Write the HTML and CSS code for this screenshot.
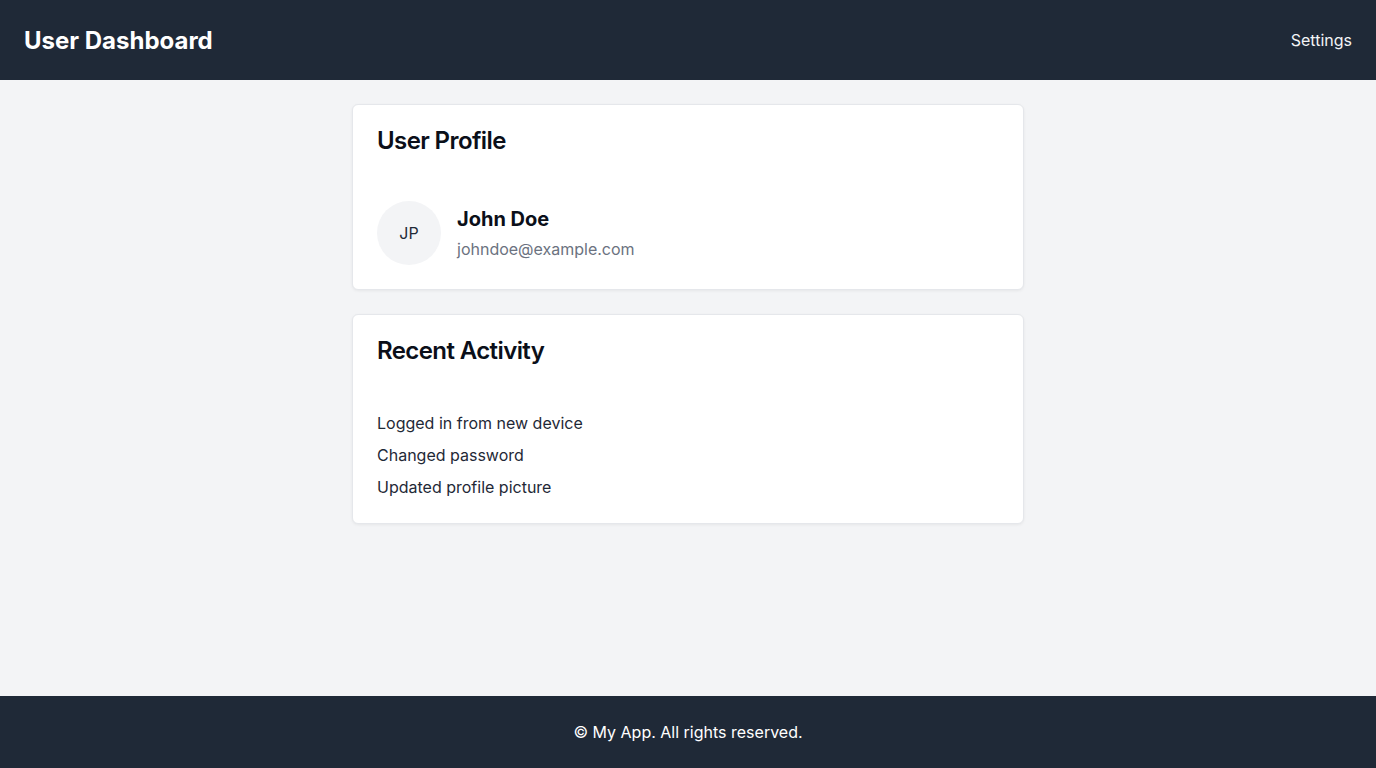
FILE: index.html
```html
<!DOCTYPE html>
<html lang="en">
<head>
<meta charset="utf-8">
<title>User Dashboard</title>
<link rel="stylesheet" href="styles.css">
</head>
<body>
<header class="topbar">
  <h1 class="brand">User Dashboard</h1>
  <nav class="nav"><a class="nav-link" href="#">Settings</a></nav>
</header>
<main class="main">
  <section class="card">
    <h2 class="card-title">User Profile</h2>
    <div class="profile">
      <div class="avatar">JP</div>
      <div class="profile-info">
        <div class="name">John Doe</div>
        <div class="email">johndoe@example.com</div>
      </div>
    </div>
  </section>
  <section class="card">
    <h2 class="card-title">Recent Activity</h2>
    <ul class="activity">
      <li>Logged in from new device</li>
      <li>Changed password</li>
      <li>Updated profile picture</li>
    </ul>
  </section>
</main>
<footer class="footer">© My App. All rights reserved.</footer>
</body>
</html>
```
FILE: styles.css
```css
* { box-sizing: border-box; }
html, body { margin: 0; padding: 0; }
body {
  font-family: Inter, "Noto Sans", "Liberation Sans", sans-serif;
  background: #f3f4f6;
  color: #111827;
  min-height: 100vh;
  display: flex;
  flex-direction: column;
}
.topbar {
  height: 80px;
  background: #1f2937;
  color: #fff;
  display: flex;
  align-items: center;
  justify-content: space-between;
  padding: 0 24px;
  flex-shrink: 0;
}
.brand {
  margin: 0;
  font-size: 24px;
  font-weight: 700;
  line-height: normal;
}
.nav-link {
  color: #f3f4f6;
  text-decoration: none;
  font-size: 16px;
}
.main {
  flex: 1;
  padding: 24px;
  display: flex;
  flex-direction: column;
  align-items: center;
  gap: 24px;
}
.card {
  width: 672px;
  background: #fff;
  border: 1px solid #e5e7eb;
  border-radius: 6px;
  box-shadow: 0 1px 3px rgba(0,0,0,0.06);
  padding: 24px;
}
.card-title {
  margin: 0 0 48px;
  font-size: 24px;
  font-weight: 600;
  line-height: 24px;
  letter-spacing: -0.025em;
  color: #0b0f19;
}
.profile {
  display: flex;
  align-items: center;
  gap: 16px;
}
.avatar {
  width: 64px;
  height: 64px;
  border-radius: 50%;
  background: #f3f4f6;
  color: #1f2937;
  font-size: 16px;
  display: flex;
  align-items: center;
  justify-content: center;
}
.profile-info {
  display: flex;
  flex-direction: column;
  gap: 4px;
}
.name {
  font-size: 20px;
  font-weight: 700;
  line-height: 28px;
  color: #0b0f19;
}
.email {
  font-size: 16px;
  line-height: 24px;
  color: #6b7280;
}
.activity {
  list-style: none;
  margin: 0;
  padding: 0;
  display: flex;
  flex-direction: column;
  gap: 8px;
  font-size: 16px;
  line-height: 24px;
  color: #1f2937;
}
.footer {
  background: #1f2937;
  color: #fff;
  text-align: center;
  padding: 0 24px;
  height: 72px;
  display: flex;
  align-items: center;
  justify-content: center;
  font-size: 16px;
  flex-shrink: 0;
}
```
